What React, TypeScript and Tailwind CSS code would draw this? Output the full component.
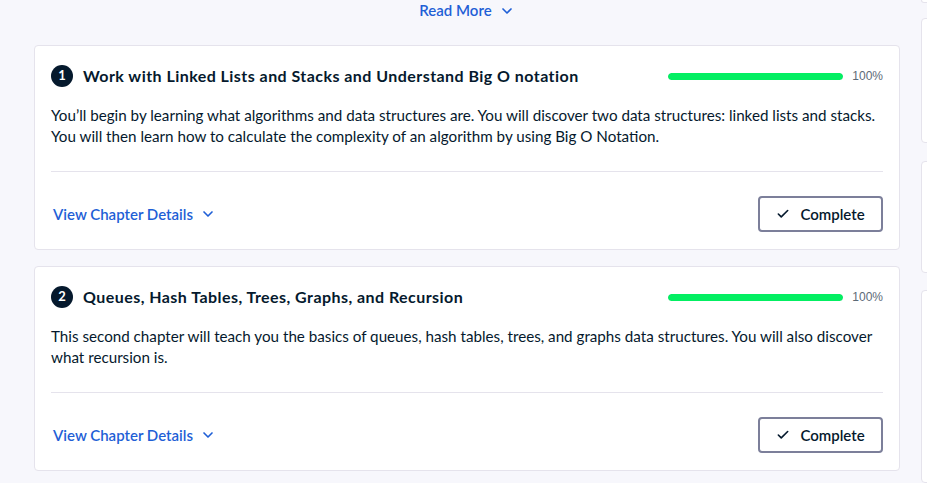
import { Check, ChevronDown } from "lucide-react";

const chapters = [
  {
    n: 1,
    title: "Work with Linked Lists and Stacks and Understand Big O notation",
    body: "You’ll begin by learning what algorithms and data structures are. You will discover two data structures: linked lists and stacks. You will then learn how to calculate the complexity of an algorithm by using Big O Notation.",
    progress: 100,
  },
  {
    n: 2,
    title: "Queues, Hash Tables, Trees, Graphs, and Recursion",
    body: "This second chapter will teach you the basics of queues, hash tables, trees, and graphs data structures. You will also discover what recursion is.",
    progress: 100,
  },
];

function ChapterCard({ c }: { c: (typeof chapters)[0] }) {
  return (
    <div className="bg-white border border-[#e5e3ec] rounded-[4px] px-4 pt-[19px] pb-[17px]">
      <div className="flex items-center">
        <div className="w-[22px] h-[22px] rounded-full bg-[#05192d] text-white text-[13px] font-bold flex items-center justify-center">
          {c.n}
        </div>
        <h3 className="ml-[10px] text-[16px] leading-[22px] tracking-[0.45px] font-bold text-[#05192d] flex-1">{c.title}</h3>
        <div className="flex items-center">
          <div className="w-[175px] h-[7px] rounded-full bg-[#e5e3ec] overflow-hidden">
            <div className="h-full bg-[#03ef62] rounded-full" style={{ width: `${c.progress}%` }} />
          </div>
          <span className="ml-[9px] text-[12px] text-[#5d6a77] font-['Liberation_Sans',sans-serif]">{c.progress}%</span>
        </div>
      </div>
      <p className="mt-[18px] text-[15.2px] leading-[21px] text-[#05192d] h-[42px]">{c.body}</p>
      <div className="mt-[24px] border-t border-[#e5e3ec]" />
      <div className="mt-[24px] flex items-center justify-between">
        <button className="flex items-center ml-[2px] text-[15px] font-semibold text-[#1f5fd6]">
          View Chapter Details
          <ChevronDown className="w-4 h-4 ml-[7px]" strokeWidth={2.5} />
        </button>
        <button className="w-[125px] h-[36px] border-2 border-[#7c7f9a] rounded-[4px] flex items-center justify-center text-[15px] font-semibold text-[#05192d]">
          <Check className="w-[14px] h-[14px] mr-[10px]" strokeWidth={2.8} />
          Complete
        </button>
      </div>
    </div>
  );
}

export default function App() {
  return (
    <div className="w-[927px] h-[483px] overflow-hidden bg-[#f7f7fc] flex pl-[34px] font-['Lato',sans-serif]">
      <div className="w-[866px] shrink-0">
        <div className="h-[21px] flex items-center justify-center">
          <button className="flex items-center text-[15px] font-semibold text-[#1f5fd6]">
            Read More
            <ChevronDown className="w-4 h-4 ml-[7px]" strokeWidth={2.5} />
          </button>
        </div>
        <div className="mt-[24px] flex flex-col gap-[16px]">
          {chapters.map((c) => (
            <ChapterCard key={c.n} c={c} />
          ))}
        </div>
      </div>
      <div className="ml-[21px] w-[200px] shrink-0 flex flex-col">
        <div className="h-[3px] bg-white border border-t-0 border-[#e5e3ec] rounded-b-[4px]" />
        <div className="mt-[15px] h-[130px] bg-white border border-[#e5e3ec] rounded-[4px]" />
        <div className="mt-[18px] h-[116px] bg-white border border-[#e5e3ec] rounded-[4px]" />
        <div className="mt-[17px] h-[200px] bg-white border border-[#e5e3ec] rounded-[4px]" />
      </div>
    </div>
  );
}
